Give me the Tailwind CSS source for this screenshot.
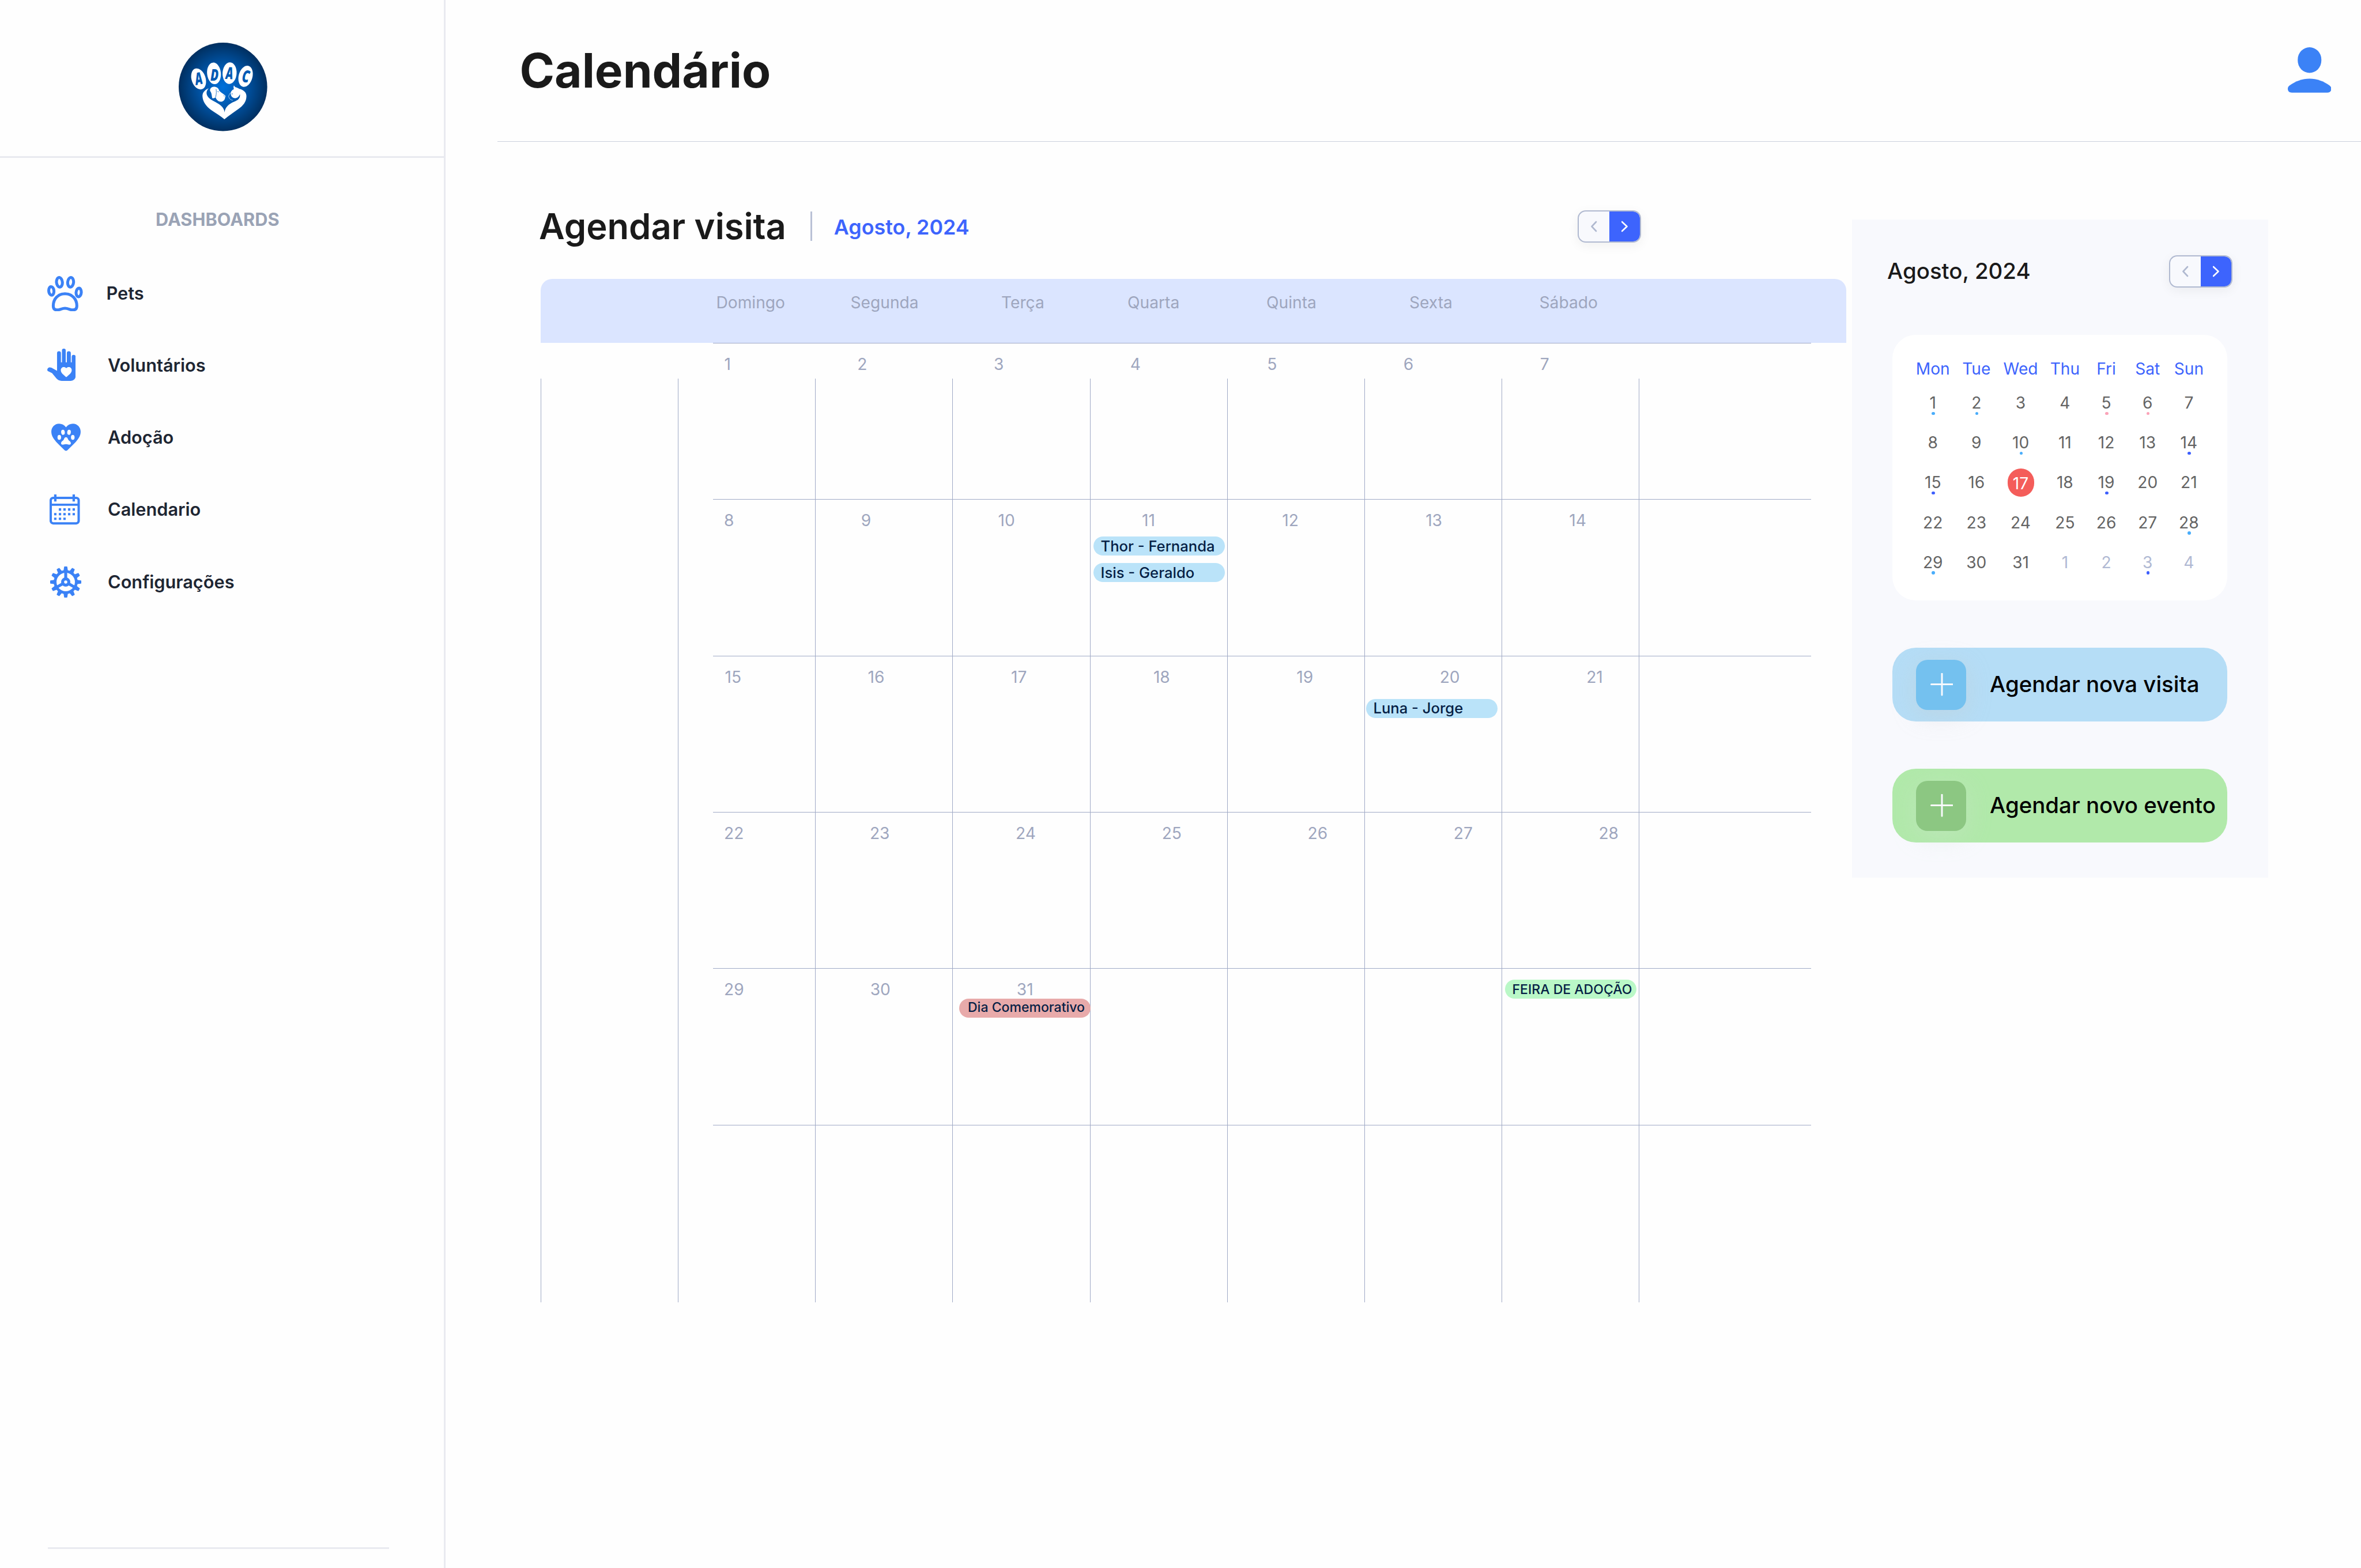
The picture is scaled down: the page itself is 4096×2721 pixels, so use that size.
<!DOCTYPE html>
<html lang="pt-BR">
<head>
<meta charset="utf-8">
<title>Calendário</title>
<script src="https://cdn.jsdelivr.net/npm/@tailwindcss/browser@4"></script>
</head>
<body class="flex h-[2721px] w-[4096px] overflow-hidden bg-[#fefefe] font-['Inter',sans-serif] leading-none whitespace-nowrap">

<!-- Sidebar -->
<aside class="flex h-full w-[773px] shrink-0 flex-col border-r-3 border-[#e9eaf0]">
  <div class="h-[274px] shrink-0 border-b-3 border-[#e9eaf0] pt-[74px] pl-[310px]">
    <svg class="size-[153.6px]" viewBox="132 108 720 720">
      <defs><radialGradient id="lg" cx=".5" cy=".5" r=".5"><stop offset="0" stop-color="#0070da"/><stop offset=".5" stop-color="#0055a8"/><stop offset="1" stop-color="#002f60"/></radialGradient></defs>
      <circle cx="492" cy="468" r="360" fill="url(#lg)"/>
      <g fill="#fff">
        <ellipse cx="294" cy="403" rx="57" ry="88" transform="rotate(-18 294 403)"/>
        <ellipse cx="419" cy="358" rx="56" ry="88" transform="rotate(-6 419 358)"/>
        <ellipse cx="546" cy="356" rx="57" ry="88" transform="rotate(3 546 356)"/>
        <ellipse cx="676" cy="382" rx="56" ry="88" transform="rotate(15 676 382)"/>
        <path d="M377 480C345 492 322 515 326 550C330 590 355 625 395 655C435 682 475 705 504 732C535 705 575 680 615 650C655 622 683 590 683 543C683 510 655 490 625 484C612 476 600 471 592 470L581 456C577 465 577 475 581 487C562 495 552 512 556 530C560 550 575 560 592 560C610 559 622 548 630 528C633 545 628 562 613 573C590 587 555 597 530 622C515 637 507 655 505 675C503 655 495 637 475 620C440 592 400 582 375 555C354 532 352 502 377 480Z"/>
        <path d="M388 486C395 468 415 464 430 468C450 473 458 484 462 500C475 515 490 522 503 532C512 536 516 545 510 552C508 570 500 586 478 588C455 589 440 575 432 552C428 558 415 561 406 560C400 545 402 520 390 505C386 498 386 492 388 486Z"/>
        <path d="M552 516C544 528 540 538 537 547C544 554 541 562 548 566C556 572 562 576 572 577" fill="none" stroke="#fff" stroke-width="3"/>
      </g>
      <path d="M436 486C439 500 440 525 432 552" fill="none" stroke="#005fbb" stroke-width="4"/>
      <path d="M447 505l11 4M561 525l12 0M499 537l5 9" fill="none" stroke="#005fbb" stroke-width="4"/>
      <g fill="#005ab4" font-family="Open Sans" font-weight="800" font-style="italic" font-size="136" text-anchor="middle">
        <text transform="translate(303 448) rotate(-12) scale(.66 1)">A</text>
        <text transform="translate(423 417) scale(.72 1)">D</text>
        <text transform="translate(543 404) rotate(2) scale(.66 1)">A</text>
        <text transform="translate(672 430) rotate(8) scale(.7 1)">C</text>
      </g>
    </svg>
  </div>
  <h2 class="mt-[92px] pl-[270px] text-[30.72px] font-bold text-[#9aa3b5]">DASHBOARDS</h2>
  <nav class="mt-[48.500px] flex flex-col pl-[82px] text-[30.72px] font-semibold text-[#1e2633]">
    <a class="flex h-[125.44px] items-center pt-[3px]">
      <span class="w-[102.500px]">
        <svg class="h-[61.4px] w-[61.8px]" viewBox="0 0 96.5 96" fill="none" stroke="#3b82f6" stroke-width="7.9">
          <ellipse cx="11" cy="40.4" rx="7" ry="11.6" transform="rotate(-5 11 40.4)"/>
          <ellipse cx="33" cy="17" rx="8" ry="13.1" transform="rotate(-5 33 17)"/>
          <ellipse cx="63.3" cy="17" rx="8" ry="13.1" transform="rotate(5 63.3 17)"/>
          <ellipse cx="85.2" cy="44.6" rx="7" ry="11.6" transform="rotate(5 85.2 44.6)"/>
          <path d="M48 48C29 48 16.200 62 16.200 81C16.200 88 19.500 92.100 26 92.100C34 92.100 39 87.600 48 87.600C57 87.600 62 92.100 70 92.100C77 92.100 80.200 88 80.200 81C80.200 62 67 48 48 48Z"/>
        </svg>
      </span>Pets</a>
    <a class="flex h-[125.44px] items-center">
      <span class="w-[105px]">
        <svg class="h-[55.9px] w-[49.3px]" viewBox="0 0 77 87.3" fill="#3b82f6" fill-rule="evenodd">
          <path d="M1 60.500C-2 55 3 50.500 7 50.800C9.500 50.900 12 51.800 14 53L26.500 60V12.200a5.300 5.300 0 0 1 10.600 0V37.100H39.800V5.200a5.100 5.200 0 0 1 10.200 0V37.100H53V12.200a5.400 5.300 0 0 1 10.800 0V37.100H66.300V22.100a5.350 5.300 0 0 1 10.700 0V74A13.300 13.300 0 0 1 63.700 87.300H39C33 87.300 28 84.500 24.500 80.500L13 66.500ZM51.500 77.300C45 71.500 36.700 66 36.700 58.500C36.700 50 46.500 47.500 51.500 53.300C56.500 47.500 66.300 50 66.300 58.500C66.300 66 58 71.500 51.500 77.300Z"/>
        </svg>
      </span><span class="pt-[1px]">Voluntários</span></a>
    <a class="flex h-[125.44px] items-center">
      <span class="w-[105px] pl-[6.5px]">
        <svg class="h-[47.6px] w-[51px]" viewBox="0 0 79.6 74.4" fill="#3b82f6">
          <path d="M39.800 10.300C35 3.500 28.500 .3 21 .3C9 .3 0 10 0 22.500C0 40 18 54.500 35.500 72Q39.800 76 44.100 72C61.600 54.500 79.600 40 79.600 22.500C79.600 10 70.600 .3 58.600 .3C51 .3 44.600 3.500 39.800 10.300Z"/>
          <g fill="#fefefe"><ellipse cx="31.6" cy="23.7" rx="4.9" ry="7" transform="rotate(-6 31.600 23.700)"/><ellipse cx="48" cy="23.7" rx="4.900" ry="7" transform="rotate(6 48 23.700)"/><ellipse cx="21.6" cy="37.5" rx="4.9" ry="6.700"/><ellipse cx="58.200" cy="37.500" rx="4.900" ry="6.700"/>
          <path d="M39.800 37C43.500 37 44.500 40 45.500 43C47.500 47 53 48.500 53 53.500C53 57 49.500 57.800 46.500 57.200C42 55.600 37.500 55.600 33 57.200C30 57.800 26.500 57 26.500 53.500C26.500 48.500 32 47 34 43C35 40 36 37 39.800 37Z"/></g>
        </svg>
      </span><span class="pt-[1px]">Adoção</span></a>
    <a class="flex h-[125.44px] items-center">
      <span class="w-[105px] pl-[4px]">
        <svg class="size-[52.5px]" viewBox="0 0 82 82" fill="#3b82f6">
          <rect x="3.150" y="9.250" width="75.700" height="69.100" rx="6.500" fill="none" stroke="#3b82f6" stroke-width="6.300"/>
          <path d="M12.200 0h6.600v19.100h-6.600zM62.200 0h6.600v19.100h-6.600zM3 24.900h76v6.100h-76zM25 37.600h6.400v6.400h-6.400zM37.300 37.600h6.400v6.400h-6.400zM49.900 37.600h6.400v6.400h-6.400zM62.300 37.600h6.400v6.400h-6.400zM12.300 50.200h6.400v6.400h-6.400zM25 50.200h6.400v6.400h-6.400zM37.300 50.200h6.400v6.400h-6.400zM49.900 50.200h6.400v6.400h-6.400zM62.300 50.200h6.400v6.400h-6.400zM12.300 62.800h6.400v6.400h-6.400zM25 62.800h6.400v6.400h-6.400zM37.300 62.800h6.400v6.400h-6.400z"/>
        </svg>
      </span><span class="pt-[1px]">Calendario</span></a>
    <a class="flex h-[125.44px] items-center">
      <span class="w-[105px] pl-[5px]">
        <svg class="size-[54px]" viewBox="-42.200 -42.200 84.400 84.400" fill="#3b82f6">
          <defs><path id="t" d="M-6 -30L-4.300 -41Q-4.100 -42.200 -3 -42.200H3Q4.100 -42.200 4.300 -41L6 -30Z"/></defs>
          <circle r="28.700" fill="none" stroke="#3b82f6" stroke-width="7.400"/>
          <use href="#t"/><use href="#t" transform="rotate(30)"/><use href="#t" transform="rotate(60)"/><use href="#t" transform="rotate(90)"/><use href="#t" transform="rotate(120)"/><use href="#t" transform="rotate(150)"/><use href="#t" transform="rotate(180)"/><use href="#t" transform="rotate(210)"/><use href="#t" transform="rotate(240)"/><use href="#t" transform="rotate(270)"/><use href="#t" transform="rotate(300)"/><use href="#t" transform="rotate(330)"/>
          <circle r="8.400" fill="none" stroke="#3b82f6" stroke-width="8.200"/>
          <path d="M0 -10V-27M8.700 5L23.400 13.500M-8.700 5L-23.400 13.500" fill="none" stroke="#3b82f6" stroke-width="8"/>
        </svg>
      </span><span class="pt-[1px]">Configurações</span></a>
  </nav>
  <div class="mt-auto mb-[33px] ml-[83px] h-[3px] w-[592px] bg-[#e9eaf0]"></div>
</aside>

<main class="flex min-w-0 flex-1 flex-col">
  <header class="ml-[90px] flex h-[246px] shrink-0 items-center justify-between border-b border-[#ccd0dd] pr-[52px] pl-[38.500px]">
    <h1 class="pt-[1px] text-[81.92px] font-bold text-[#1a1a1a]">Calendário</h1>
    <svg class="-mt-[2px] h-[78.800px] w-[75.500px]" viewBox="0 0 118 123" fill="#3b82f6">
      <rect x="27" y="0" width="64" height="69.300" rx="32" ry="33"/>
      <path d="M11 123C4 123 0 119 0 112.500C0 108 2.500 105.500 5 103.500C20 92 40 85 59 85C78 85 98 92 113 103.500C115.500 105.500 118 108 118 112.500C118 119 114 123 107 123Z"/>
    </svg>
  </header>

  <div class="flex">
    <!-- Monthly calendar -->
    <section class="ml-[165px] w-[2265px] shrink-0">
      <div class="flex h-[238px] w-[1909px] items-center pt-[55px]">
        <h2 class="-ml-[3px] text-[61.44px] font-semibold text-[#1a1a1a]">Agendar visita</h2>
        <span class="ml-[42px] h-[51px] w-[3px] bg-[#b9c1d6]"></span>
        <span class="ml-[38px] pt-[4px] text-[35.84px] font-semibold text-[#3d64fd]">Agosto, 2024</span>
        <div class="ml-auto flex h-[56px] w-[110px] rounded-[14px] shadow-[0_5px_20px_rgba(0,0,0,0.06)]">
          <span class="flex flex-1 items-center justify-center rounded-l-[14px] border-2 border-r-0 border-[#b0b9d0] bg-[#f8f9fd]">
            <svg class="h-[20px] w-[12px]" viewBox="0 0 12 20" fill="none" stroke="#b0b9d0" stroke-width="2.600" stroke-linecap="round" stroke-linejoin="round"><path d="M9 2L1.500 10L9 18"/></svg>
          </span>
          <span class="flex flex-1 items-center justify-center rounded-r-[14px] border-2 border-l-0 border-[#b0b9d0] bg-[#3d64fd] bg-clip-padding">
            <svg class="h-[20px] w-[12px]" viewBox="0 0 12 20" fill="none" stroke="#fff" stroke-width="2.600" stroke-linecap="round" stroke-linejoin="round"><path d="M1 2L9.500 10L1 18"/></svg>
          </span>
        </div>
      </div>

      <div class="flex h-[111px] rounded-t-[20px] bg-[#dbe5ff] pt-[27px] pl-[304.500px] text-[28.160px] text-[#9ea6be]">
        <span class="w-[233px]">Domingo</span><span class="w-[261.500px]">Segunda</span><span class="w-[219px]">Terça</span><span class="w-[241px]">Quarta</span><span class="w-[248px]">Quinta</span><span class="w-[225.500px]">Sexta</span><span>Sábado</span>
      </div>

      <div class="relative h-[1665px] text-[28.160px] text-[#9ea6be]">
        <!-- Column rules run behind the week rows -->
        <div class="absolute top-[62px] left-0 flex h-[1603px] w-[1906px] justify-between">
          <i class="w-px bg-[#a0aac6]"></i><i class="w-px bg-[#a0aac6]"></i><i class="w-px bg-[#a0aac6]"></i><i class="w-px bg-[#a0aac6]"></i><i class="w-px bg-[#a0aac6]"></i><i class="w-px bg-[#a0aac6]"></i><i class="w-px bg-[#a0aac6]"></i><i class="w-px bg-[#a0aac6]"></i><i class="w-px bg-[#a0aac6]"></i>
        </div>
        <div class="relative ml-[299px] w-[1905px]">
          <div class="flex h-[271.360px] gap-[219.400px] border-t border-[#a0aac6] pt-[22px] pl-[19.500px]"><span>1</span><span>2</span><span>3</span><span>4</span><span>5</span><span>6</span><span>7</span></div>
          <div class="relative flex h-[271.360px] gap-[220.300px] border-t border-[#a0aac6] pt-[22px] pl-[19px]"><span>8</span><span>9</span><span>10</span><span>11</span><span>12</span><span>13</span><span>14</span>
            <div class="absolute top-[64px] left-[660px] flex flex-col gap-[13px] text-[25.600px] font-medium text-[#061f45]">
              <span class="flex h-[33px] w-[228px] items-center rounded-full bg-[#bae3f9] pl-[12.500px]">Thor - Fernanda</span>
              <span class="flex h-[33px] w-[228px] items-center rounded-full bg-[#bae3f9] pl-[12.500px]">Isis - Geraldo</span>
            </div>
          </div>
          <div class="relative flex h-[271.360px] gap-[219.500px] border-t border-[#a0aac6] pt-[22px] pl-[20.500px]"><span>15</span><span>16</span><span>17</span><span>18</span><span>19</span><span>20</span><span>21</span>
            <span class="absolute top-[74px] left-[1133px] flex h-[33px] w-[228px] items-center rounded-full bg-[#bae3f9] pl-[12.500px] text-[25.600px] font-medium text-[#061f45]">Luna - Jorge</span>
          </div>
          <div class="flex h-[271.360px] gap-[218.600px] border-t border-[#a0aac6] pt-[22px] pl-[19px]"><span>22</span><span>23</span><span>24</span><span>25</span><span>26</span><span>27</span><span>28</span></div>
          <div class="relative flex h-[271.360px] gap-[219px] border-t border-[#a0aac6] pt-[22px] pl-[19px]"><span>29</span><span>30</span><span>31</span>
            <span class="absolute top-[52px] left-[427px] flex h-[33px] w-[228px] items-center rounded-full bg-[#e8aaaa] pb-[2px] pl-[15px] text-[23.040px] font-medium text-[#061f45]">Dia Comemorativo</span>
            <span class="absolute top-[19px] left-[1374px] flex h-[33px] w-[228px] items-center rounded-full bg-[#baf8c7] pt-[1px] pl-[12.500px] text-[23.040px] font-medium text-[#061f45]">FEIRA DE ADOÇÃO</span>
          </div>
          <div class="border-t border-[#a0aac6]"></div>
        </div>
      </div>
    </section>

    <!-- Side panel -->
    <aside class="mt-[135px] ml-[10px] h-[1142px] w-[722px] shrink-0 bg-[#f8f9fd] pt-[62px]">
      <div class="flex items-center justify-between pr-[62px] pl-[61px]">
        <h3 class="-mt-[2px] text-[38.400px] font-medium text-[#1a1a1a]">Agosto, 2024</h3>
        <div class="flex h-[56px] w-[110px] rounded-[14px] shadow-[0_5px_20px_rgba(0,0,0,0.06)]">
          <span class="flex flex-1 items-center justify-center rounded-l-[14px] border-2 border-r-0 border-[#b0b9d0] bg-[#f8f9fd]">
            <svg class="h-[20px] w-[12px]" viewBox="0 0 12 20" fill="none" stroke="#b0b9d0" stroke-width="2.600" stroke-linecap="round" stroke-linejoin="round"><path d="M9 2L1.500 10L9 18"/></svg>
          </span>
          <span class="flex flex-1 items-center justify-center rounded-r-[14px] border-2 border-l-0 border-[#b0b9d0] bg-[#3d64fd] bg-clip-padding">
            <svg class="h-[20px] w-[12px]" viewBox="0 0 12 20" fill="none" stroke="#fff" stroke-width="2.600" stroke-linecap="round" stroke-linejoin="round"><path d="M1 2L9.500 10L1 18"/></svg>
          </span>
        </div>
      </div>

      <div class="mt-[82px] ml-[70px] h-[461px] w-[581px] rounded-[41px] bg-white pt-[45px] pl-[32.500px] text-[28.160px] text-[#646464]">
        <div class="mb-[10.600px] grid grid-cols-[75.520px_75.520px_78.080px_75.520px_67.840px_75.520px_67.840px] text-center text-[#3d64fd]">
          <span>Mon</span><span>Tue</span><span>Wed</span><span>Thu</span><span>Fri</span><span>Sat</span><span>Sun</span>
        </div>
        <div id="mini" class="grid auto-rows-[69.120px] grid-cols-[75.520px_75.520px_78.080px_75.520px_67.840px_75.520px_67.840px]"></div>
      </div>

      <button class="mt-[82px] ml-[70px] flex h-[128px] w-[581px] items-center gap-[41px] rounded-[41px] bg-[#b5ddf6] pl-[41px] text-[38.400px] font-medium text-black">
        <span class="flex size-[87px] items-center justify-center rounded-[20px] bg-[#74c1ef] shadow-[0_10px_40px_rgba(200,200,200,0.350)]">
          <svg class="size-[40px]" viewBox="0 0 40 40" stroke="#f8f9fd" stroke-width="3" stroke-linecap="round"><path d="M21 1V38M2.500 19.500H39.500"/></svg>
        </span><span class="pb-[2px]">Agendar nova visita</span></button>
      <button class="mt-[82px] ml-[70px] flex h-[128px] w-[581px] items-center gap-[41px] rounded-[41px] bg-[#b1e9aa] pl-[41px] text-[38.400px] font-medium text-black">
        <span class="flex size-[87px] items-center justify-center rounded-[20px] bg-[#8cc782] shadow-[0_10px_40px_rgba(205,228,205,0.400)]">
          <svg class="size-[40px]" viewBox="0 0 40 40" stroke="#f8f9fd" stroke-width="3" stroke-linecap="round"><path d="M21 1V38M2.500 19.500H39.500"/></svg>
        </span><span class="pb-[2px]">Agendar novo evento</span></button>
    </aside>
  </div>
</main>

<script>
  // Mini calendar: day markers keyed by cell index
  const marks = {0:'bg-[#49adfb]',1:'bg-[#49adfb]',4:'bg-[#fba3b8]',5:'bg-[#fba3b8]',9:'bg-[#49adfb]',13:'bg-[#3d5ffd]',14:'bg-[#3d5ffd]',18:'bg-[#3d5ffd]',27:'bg-[#49adfb]',28:'bg-[#49adfb]',33:'bg-[#3d5ffd]'};
  let html = '';
  for (let i = 0; i < 35; i++) {
    const day = i < 31 ? i + 1 : i - 30;
    const dot = marks[i] ? `<i class="absolute top-[50px] left-1/2 size-[5.500px] -translate-x-[2px] rounded-full ${marks[i]}"></i>` : '';
    const num = i === 16
      ? `<span class="flex h-[49px] w-[46px] items-center justify-center rounded-full bg-[#f45d5a] pt-[4px] text-white">17</span>`
      : `<span class="${i > 30 ? 'text-[#b0b9d3]' : ''}">${day}</span>`;
    html += `<div class="relative flex items-center justify-center">${num}${dot}</div>`;
  }
  document.getElementById('mini').innerHTML = html;
</script>
</body>
</html>
